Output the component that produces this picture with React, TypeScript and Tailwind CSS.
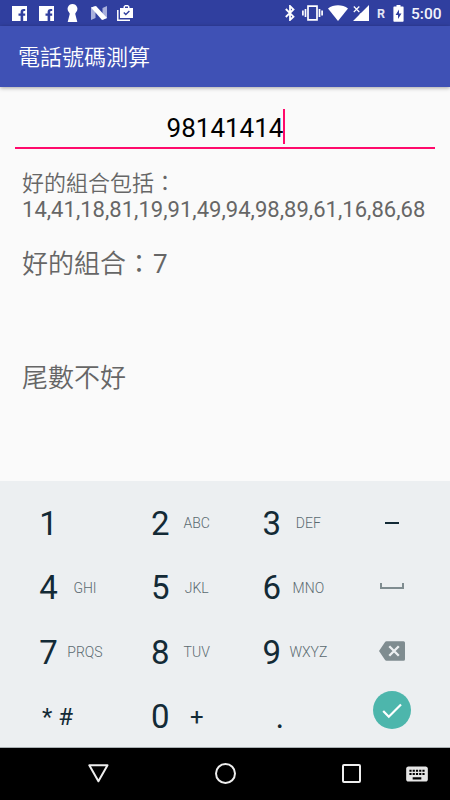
import type { ReactNode } from "react";
import { MdKeyboard } from "react-icons/md";

function FacebookIcon() {
  return (
    <svg className="w-[15px] h-[15px]" viewBox="0 0 15 15">
      <path fill="#fff" d="M0 0h15v15h-3.800V9.800h2V7.600h-2V6.200c0-.8.4-1.100 1.100-1.100h.9V3h-1.500C9.600 3 8.600 4.200 8.600 5.900v1.700H6.500v2.200h2.100V15H0z" />
    </svg>
  );
}

function StatusBar() {
  return (
    <header className="h-[26px] bg-[#303f9f] text-white flex items-center">
      <div className="flex items-center pl-3">
        <FacebookIcon />
        <div className="w-3" />
        <FacebookIcon />
        <svg className="w-[11px] h-[18px] ml-[13px]" viewBox="0 0 11 18">
          <path fill="#fff" d="M5.500 0a4.900 4.900 0 0 1 3.400 8.400l-.7 1.400L10.300 18H.7L2.800 9.800l-.7-1.400A4.900 4.900 0 0 1 5.500 0z" />
        </svg>
        <svg className="w-4 h-[14px] ml-[13px]" viewBox="0 0 16 14">
          <path fill="#a9b0dc" d="M0 1.500L4.500 0v12L0 14zM11.500 2L16 0v12l-4.500 2z" />
          <path fill="#fff" d="M0 1.500L5 0l11 12-5 2z" />
        </svg>
        <svg className="w-[17px] h-4 ml-[10px]" viewBox="0 0 17 16">
          <path fill="none" stroke="#fff" strokeWidth="1.500" d="M.8 5v10.200H13" />
          <path fill="#fff" fillRule="evenodd" d="M3 3h3.500V1.500L8 0h3l1.500 1.500V3H16v10H3zM8 3h3V1.500H8z" />
          <path fill="none" stroke="#303f9f" strokeWidth="1.400" d="M6.800 7.500l2 2 3.600-3.600" />
        </svg>
      </div>
      <div className="flex items-center ml-auto pr-[9px]">
        <svg className="w-[10px] h-4" viewBox="0 0 10 16">
          <path fill="none" stroke="#fff" strokeWidth="1.800" d="M.8 4l7.700 7.700L5 15V1l3.500 3.500L.8 12" />
        </svg>
        <svg className="w-[21px] h-4 ml-[7px]" viewBox="0 0 21 16">
          <path fill="none" stroke="#fff" strokeWidth="1.700" d="M6 1.200h9v13.600H6zM3.500 4v8M17.500 4v8M.9 5.500v5M20.100 5.500v5" />
        </svg>
        <svg className="w-5 h-4 ml-[5px]" viewBox="0 0 20 16">
          <path fill="#fff" d="M10 16L0 3.500C5.500-.9 14.500-.9 20 3.500z" />
        </svg>
        <svg className="w-4 h-4 ml-[5px]" viewBox="0 0 16 16">
          <path fill="#fff" d="M16 0v16H0l6.500-6.500V9l2-1.500z" />
          <path fill="none" stroke="#fff" strokeWidth="1.200" d="M.8 1.500l5.500 5.500M6.300 1.500L.8 7" />
        </svg>
        <span className="ml-2 mt-px w-2 text-[12.500px] leading-4 font-bold text-[#e3e6f5]">R</span>
        <svg className="w-[11px] h-[17px] ml-2" viewBox="0 0 11 17">
          <path fill="#fff" fillRule="evenodd" d="M3.500 0h4v1.600H10q.6 0 .6.8V16q0 .8-.8.8H1.200q-.8 0-.8-.8V2.400q0-.8.8-.8h2.300zM6 4.500L2.600 10H5v4l3.500-5.500H6z" />
        </svg>
        <span className="ml-[7px] mt-[2px] w-[30px] text-[15.500px] leading-4 font-medium text-[#f3f4fb]">5:00</span>
      </div>
    </header>
  );
}

function Key({ digit, letters }: { digit: string; letters?: ReactNode }) {
  return (
    <div className="flex items-center pl-[30px]">
      <span className="w-[37px] text-center text-[33px] leading-none text-[#132a36]">{digit}</span>
      <span className="w-9 flex justify-center whitespace-nowrap text-[14px] leading-none font-[350] text-[#5a6a70]">{letters}</span>
    </div>
  );
}

function Keypad() {
  return (
    <section className="h-[267px] bg-[#eceff1] pt-[10px] border-b border-[#a9b0b3] grid grid-cols-[111.700px_111.700px_111.700px_114px] auto-rows-[64.500px] text-[#132a36]">
      <Key digit="1" />
      <Key digit="2" letters="ABC" />
      <Key digit="3" letters="DEF" />
      <div className="flex items-center justify-center">
        <div className="w-[14px] h-[2px] bg-[#132a36]" />
      </div>

      <Key digit="4" letters="GHI" />
      <Key digit="5" letters="JKL" />
      <Key digit="6" letters="MNO" />
      <div className="flex items-center justify-center pb-[4px]">
        <div className="w-6 h-[6px] border-2 border-t-0 border-[#7f8c90]" />
      </div>

      <Key digit="7" letters="PRQS" />
      <Key digit="8" letters="TUV" />
      <Key digit="9" letters="WXYZ" />
      <div className="flex items-center justify-center pb-[3px]">
        <svg className="w-[26px] h-5" viewBox="0 0 26 20">
          <path fill="#7f8c90" d="M7.500.3H24.500Q26 .3 26 1.800v16.400q0 1.500-1.500 1.500H7.500q-1 0-1.600-.9L0 10 5.900 1.200Q6.500.3 7.500.3z" />
          <path stroke="#eceff1" strokeWidth="2.300" d="M10.300 5.200l9.500 9.600M19.800 5.200l-9.500 9.600" />
        </svg>
      </div>

      <div className="flex items-center pl-[42px] text-[24px] leading-none">
        <span>*</span>
        <span className="ml-[6px]">#</span>
      </div>
      <Key digit="0" letters={<span className="text-[24px] font-normal text-[#132a36]">+</span>} />
      <div className="flex items-center pl-[52px] text-[33px] leading-none">.</div>
      <div className="flex justify-center pt-[6px]">
        <div className="w-[38px] h-[38px] rounded-full bg-[#4db6ac]">
          <svg className="w-[38px] h-[38px]" viewBox="0 0 38 38">
            <path fill="none" stroke="#fff" strokeWidth="2.200" d="M10.200 20l5.600 5.800L28 13.500" />
          </svg>
        </div>
      </div>
    </section>
  );
}

function NavBar() {
  return (
    <nav className="h-[52px] bg-black flex items-center pl-[88px] pb-px">
      <svg className="w-[21px] h-[19px]" viewBox="0 0 21 19">
        <path fill="none" stroke="#eee" strokeWidth="2" strokeLinejoin="round" d="M1.300 1.300h18.200l-9.100 16z" />
      </svg>
      <div className="w-[21px] h-[21px] ml-[105.500px] rounded-full border-2 border-[#eee]" />
      <div className="w-[19px] h-[19px] ml-[106.500px] rounded-[2px] border-2 border-[#eee]" />
      <MdKeyboard className="w-[26px] h-[26px] ml-[43px] text-[#e6e6e6]" />
    </nav>
  );
}

export default function App() {
  return (
    <div className="w-[450px] h-[800px] overflow-hidden flex flex-col bg-[#fafafa] font-['Roboto','Noto_Sans_CJK_TC',sans-serif]">
      <StatusBar />
      <div className="h-[61px] bg-[#3f51b5] shadow-[0_1px_4px_rgba(0,0,0,0.350)] flex items-center pl-[18px] pt-[2px] text-[22px] leading-none font-[350] text-white">
        電話號碼測算
      </div>

      <main className="flex-1 text-[#666]">
        <div className="mx-[15px] mt-[22px] h-[40px] border-b-2 border-[#ff0a6c] flex justify-center text-[26px] leading-[38px] text-black">
          <span>98141414</span>
          <span className="w-[2px] h-[35px] -mr-[2px] bg-[#ff0a6c]" />
        </div>
        <div className="pl-[22px] pt-[22px] text-[22px] leading-[26px]">
          <p className="font-[350]">好的組合包括：</p>
          <p className="whitespace-nowrap tracking-[0.020px]">14,41,18,81,19,91,49,94,98,89,61,16,86,68</p>
        </div>
        <p className="pl-[22px] mt-[26px] text-[26px] leading-[30px] font-[350]">
          好的組合：<span className="font-normal ml-px">7</span>
        </p>
        <p className="pl-[22px] mt-[84px] text-[26px] leading-[30px] font-[350]">尾數不好</p>
      </main>

      <Keypad />
      <NavBar />
    </div>
  );
}
